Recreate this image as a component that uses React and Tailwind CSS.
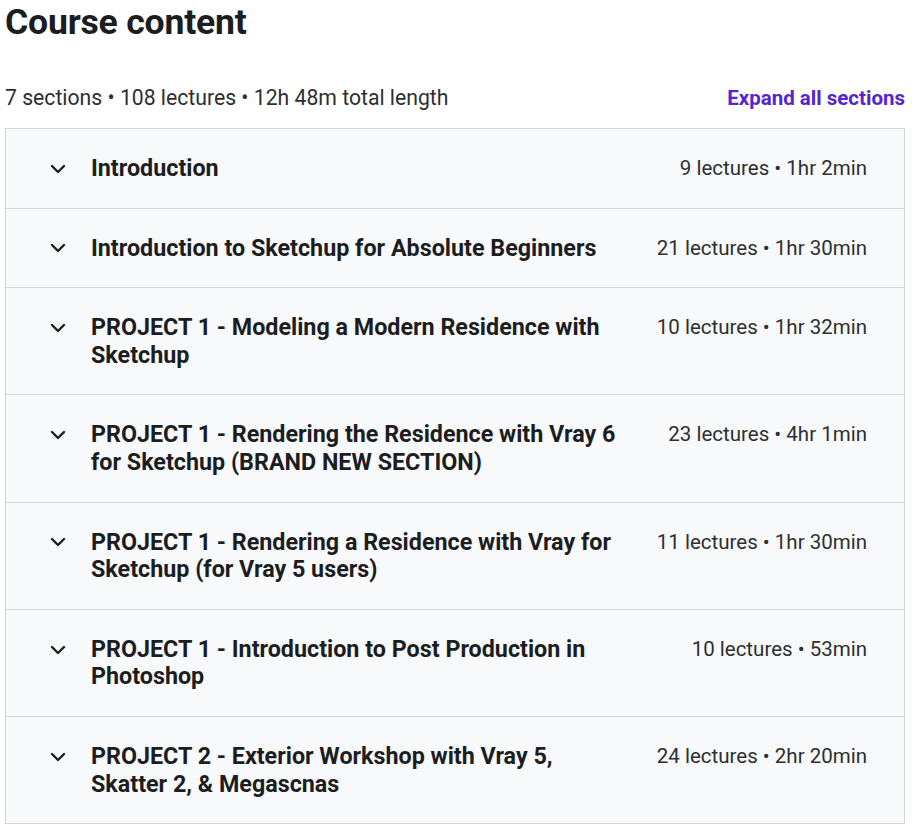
const sections = [
  { title: 'Introduction', meta: '9 lectures • 1hr 2min' },
  { title: 'Introduction to Sketchup for Absolute Beginners', meta: '21 lectures • 1hr 30min' },
  { title: 'PROJECT 1 - Modeling a Modern Residence with Sketchup', meta: '10 lectures • 1hr 32min' },
  { title: 'PROJECT 1 - Rendering the Residence with Vray 6 for Sketchup (BRAND NEW SECTION)', meta: '23 lectures • 4hr 1min' },
  { title: 'PROJECT 1 - Rendering a Residence with Vray for Sketchup (for Vray 5 users)', meta: '11 lectures • 1hr 30min' },
  { title: 'PROJECT 1 - Introduction to Post Production in Photoshop', meta: '10 lectures • 53min' },
  { title: 'PROJECT 2 - Exterior Workshop with Vray 5, Skatter 2, & Megascnas', meta: '24 lectures • 2hr 20min' },
]

export default function App() {
  return (
    <div className="min-h-screen bg-white text-[#2d2f31] font-['Roboto',sans-serif] pl-[5px] pr-[7px]">
      <h1 className="text-[35.6px] font-bold leading-[44px] tracking-[-0.2px] text-[#1c1d1f]">Course content</h1>

      <div className="flex items-end justify-between mt-[40px] mb-[16px]">
        <span className="text-[21.2px] leading-[28px]">7 sections • 108 lectures • 12h 48m total length</span>
        <button className="text-[20.5px] leading-[28px] font-bold text-[#5624d0]">Expand all sections</button>
      </div>

      <div className="border border-[#d1d7dc] border-b-0">
        {sections.map((s) => (
          <SectionRow key={s.title} section={s} />
        ))}
      </div>
    </div>
  )
}

function SectionRow({ section }) {
  return (
    <div className="flex items-start bg-[#f7f9fa] border-b border-[#d1d7dc] pl-[40px] pr-[37px] pt-[26px] pb-[25px]">
      <span className="w-[24px] h-[27.6px] flex items-center justify-center shrink-0 mr-[21px]">
        <svg width="16" height="10" viewBox="0 0 16 10" fill="none">
          <path d="M2 2l6 6 6-6" stroke="#1c1d1f" strokeWidth="2.4" strokeLinecap="round" strokeLinejoin="round" />
        </svg>
      </span>
      <h3 className="flex-1 text-[23.3px] leading-[27.6px] font-bold text-[#1c1d1f]">{section.title}</h3>
      <span className="ml-[36px] shrink-0 text-[20.5px] leading-[27.6px]">{section.meta}</span>
    </div>
  )
}
